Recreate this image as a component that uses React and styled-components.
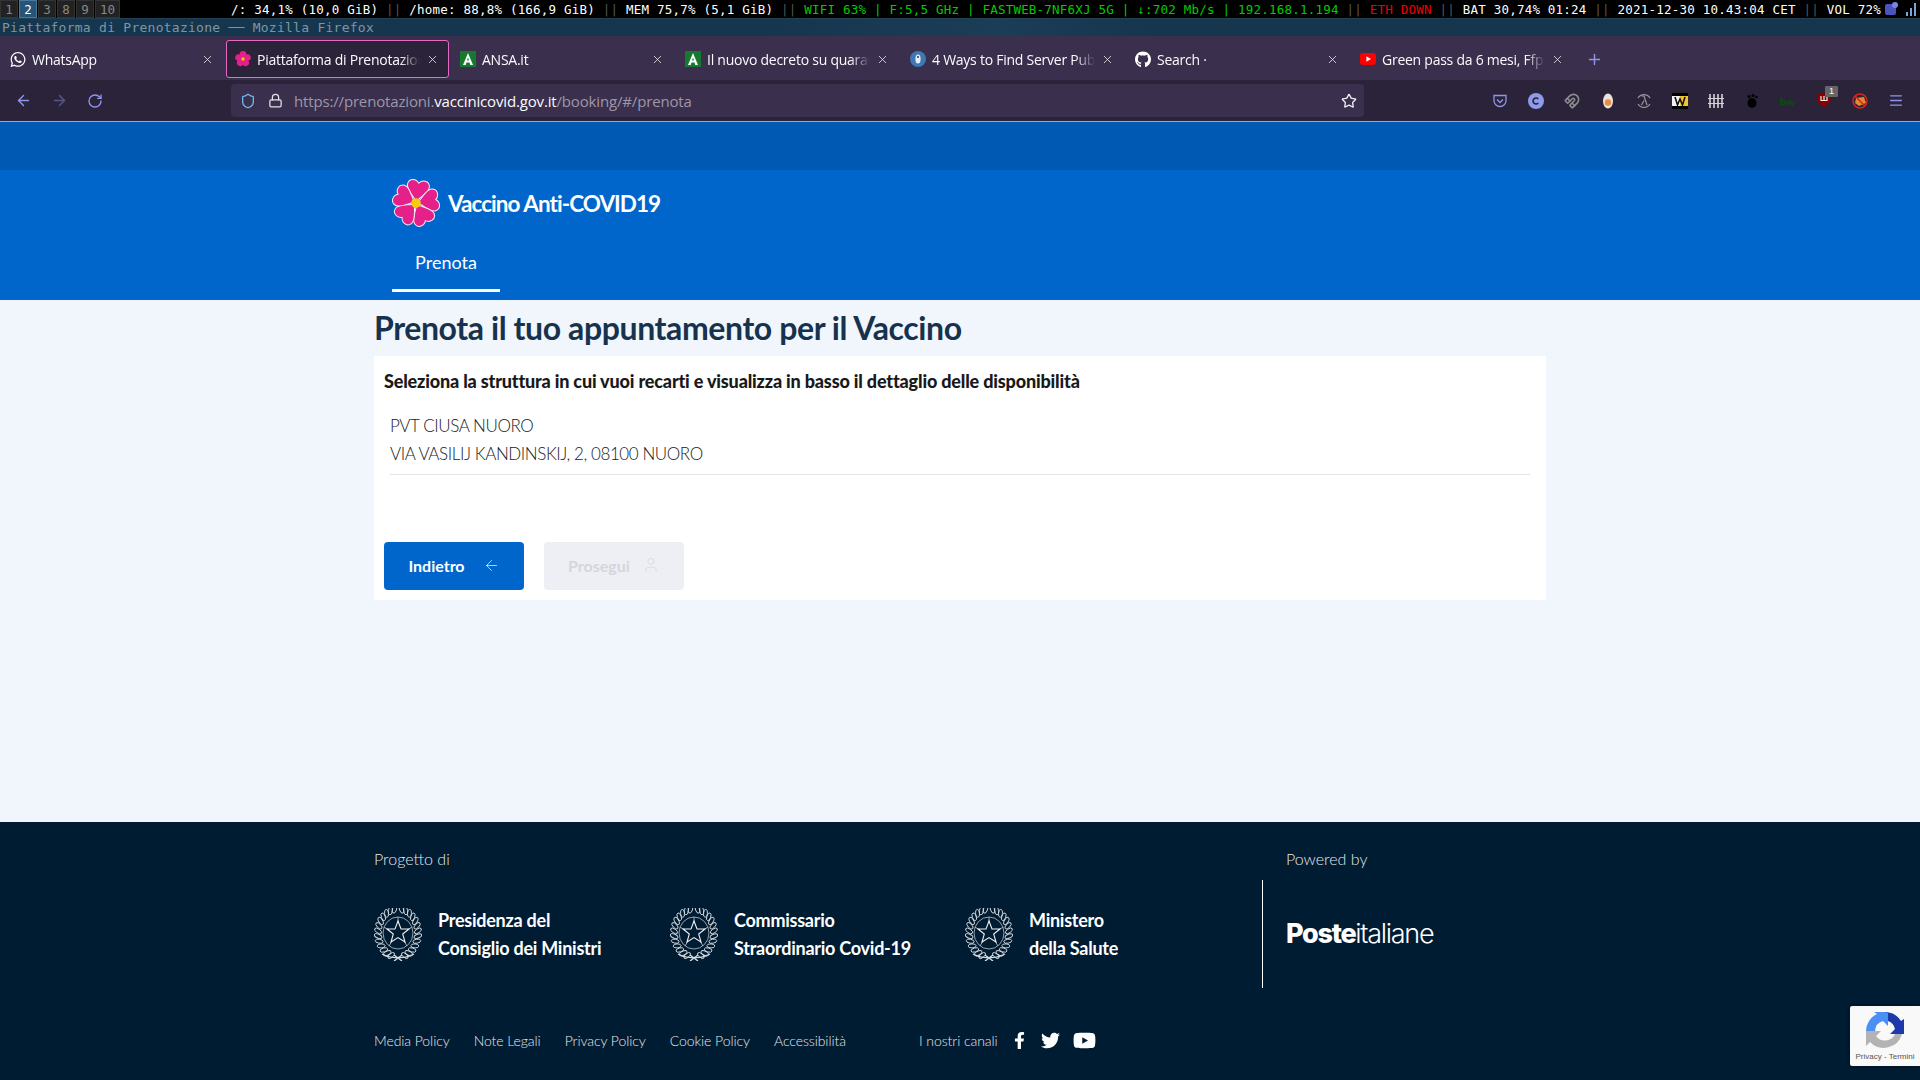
import React from 'react';
import styled, { createGlobalStyle } from 'styled-components';
import { FaWhatsapp, FaGithub, FaYoutube, FaFacebookF, FaTwitter } from 'react-icons/fa';
import { ArrowLeft, ArrowRight, RotateCw, Plus, X, Star, Lock, Shield, Menu, Magnet, User } from 'lucide-react';

const GlobalStyle = createGlobalStyle`
  html, body { margin: 0; padding: 0; height: 100%; overflow: hidden; }
  body { font-family: 'Lato', 'Open Sans', sans-serif; background: #f0f6fc; }
`;

const Screen = styled.div`
  height: 1080px;
  display: flex;
  flex-direction: column;
  position: relative;
  overflow: hidden;
`;

/* window manager bars */
const StatusBar = styled.div`
  height: 18px;
  background: #000;
  display: flex;
  align-items: center;
  justify-content: space-between;
  font-family: 'DejaVu Sans Mono', monospace;
  font-size: 12.5px;
  white-space: pre;
`;

const Workspaces = styled.div`
  display: flex;
  gap: 1px;
`;

const Workspace = styled.span`
  height: 18px;
  min-width: 18px;
  padding: 0 4px;
  box-sizing: border-box;
  display: flex;
  align-items: center;
  justify-content: center;
  border: 1px solid ${p => (p.$active ? '#4c7899' : '#333')};
  background: ${p => (p.$active ? '#285577' : '#222')};
  color: ${p => (p.$active ? '#fff' : '#888')};
`;

const Status = styled.div`
  display: flex;
  align-items: center;
  letter-spacing: 0.22px;
`;

const Chunk = styled.span`
  color: ${p => p.$color || '#fff'};
`;

const Tray = styled.svg`
  margin-left: 3px;
  flex: none;
`;

const TitleBar = styled.div`
  height: 18px;
  box-sizing: border-box;
  background: linear-gradient(90deg, #16364e 0%, #16364e 40%, #1b3d55 52%, #16364e 60%);
  border-top: 1px solid #1f4258;
  color: #7d96a6;
  font-family: 'DejaVu Sans Mono', monospace;
  font-size: 13px;
  letter-spacing: 0.26px;
  line-height: 17px;
  padding-left: 2px;
  white-space: pre;
`;

/* firefox */
const TabStrip = styled.div`
  height: 44px;
  background: #3a2f4c;
  display: flex;
  align-items: flex-start;
  padding: 4px 0 0 1px;
  box-sizing: border-box;
  gap: 2px;
`;

const Tab = styled.div`
  width: 223px;
  height: 38px;
  box-sizing: border-box;
  flex: none;
  display: flex;
  align-items: center;
  padding: 0 9px 0 8px;
  gap: 6px;
  border-radius: 3px;
  border: 1px solid ${p => (p.$active ? '#e56ac6' : 'transparent')};
  background: ${p => (p.$active ? '#2b2339' : 'transparent')};
  color: #fbfbfe;
  font-family: 'Open Sans', sans-serif;
  font-size: 14px;
  letter-spacing: -0.25px;
`;

const TabIcon = styled.span`
  width: 16px;
  height: 16px;
  flex: none;
  display: flex;
  align-items: center;
  justify-content: center;
`;

const TabLabel = styled.span`
  flex: 1;
  overflow: hidden;
  white-space: nowrap;
  mask-image: linear-gradient(90deg, #000 88%, transparent 100%);
`;

const NewTab = styled.div`
  margin-left: 10px;
  height: 38px;
  display: flex;
  align-items: center;
  color: #8f95ea;
`;

const NavBar = styled.div`
  height: 42px;
  box-sizing: border-box;
  background: #2b2339;
  border-bottom: 1px solid #d58bd6;
  display: flex;
  align-items: center;
  color: #8f95ea;
`;

const NavButtons = styled.div`
  width: 231px;
  flex: none;
  display: flex;
  align-items: center;
  gap: 19px;
  padding-left: 15px;
  box-sizing: border-box;
`;

const NavIcon = styled.span`
  display: flex;
  opacity: ${p => (p.$dim ? 0.45 : 1)};
`;

const UrlBar = styled.div`
  width: 1133px;
  height: 33px;
  box-sizing: border-box;
  flex: none;
  border-radius: 4px;
  background: #3a2f4c;
  display: flex;
  align-items: center;
  padding: 0 7px 0 9px;
  font-family: 'Open Sans', sans-serif;
  font-size: 15px;
  letter-spacing: -0.16px;
  color: #9d97aa;
`;

const UrlIcons = styled.div`
  display: flex;
  align-items: center;
  gap: 12px;
  margin-right: 11px;
`;

const UrlText = styled.div`
  flex: 1;
  b {
    font-weight: 400;
    color: #fbfbfe;
  }
`;

const Extensions = styled.div`
  flex: 1;
  display: flex;
  justify-content: flex-end;
  gap: 20px;
  padding-right: 16px;
`;

const Extension = styled.span`
  width: 16px;
  height: 16px;
  display: flex;
  align-items: center;
  justify-content: center;
  position: relative;
`;

const Badge = styled.span`
  position: absolute;
  top: -7px;
  right: -6px;
  width: 13px;
  height: 11px;
  background: #666;
  color: #fff;
  font-family: 'Liberation Sans', sans-serif;
  font-size: 9px;
  line-height: 11px;
  text-align: center;
  border-radius: 1px;
`;

/* page */
const TopBand = styled.div`
  height: 48px;
  background: #0059b3;
  flex: none;
`;

const Header = styled.header`
  height: 130px;
  flex: none;
  background: #0066cc;
  box-sizing: border-box;
  padding: 9px 0 0 392px;
  display: flex;
  flex-direction: column;
`;

const Brand = styled.div`
  display: flex;
  align-items: center;
  gap: 8px;
  color: #fff;
  font-size: 22.5px;
  font-weight: 700;
  letter-spacing: -0.95px;
  height: 48px;
`;

const HeaderTab = styled.div`
  margin-top: 17px;
  width: 108px;
  height: 48px;
  box-sizing: border-box;
  border-bottom: 3px solid #fff;
  color: #fff;
  font-size: 18px;
  text-align: center;
  line-height: 36px;
`;

const Main = styled.main`
  flex: 1;
  width: 1172px;
  margin: 0 auto;
  padding-top: 7px;
`;

const Title = styled.h1`
  margin: 0 0 8px;
  font-size: 32px;
  line-height: 41px;
  font-weight: 700;
  letter-spacing: -0.4px;
  color: #17324d;
`;

const Card = styled.section`
  background: #fff;
  height: 244px;
  box-sizing: border-box;
  padding: 12px 16px 10px 10px;
  display: flex;
  flex-direction: column;
`;

const CardTitle = styled.div`
  font-size: 18px;
  line-height: 26px;
  font-weight: 900;
  letter-spacing: -0.17px;
  color: #19191a;
`;

const Facility = styled.div`
  margin: 18px 0 0 6px;
  padding-bottom: 6px;
  border-bottom: 1px solid #e3e4e6;
  font-size: 17px;
  font-weight: 300;
  letter-spacing: -0.42px;
  line-height: 28px;
  color: #19191a;
`;

const Buttons = styled.div`
  margin-top: auto;
  display: flex;
  gap: 20px;
`;

const Button = styled.button`
  width: 140px;
  height: 48px;
  border: 0;
  border-radius: 4px;
  padding: 0 0 2px;
  display: flex;
  align-items: center;
  justify-content: center;
  gap: ${p => p.$gap || 18}px;
  font-family: inherit;
  font-size: 16px;
  font-weight: 700;
  background: ${p => (p.disabled ? '#eeeff4' : '#0066cc')};
  color: ${p => (p.disabled ? '#d4d6de' : '#fff')};
`;

const Footer = styled.footer`
  height: 258px;
  flex: none;
  background: #001c33;
  color: #fff;
`;

const FooterInner = styled.div`
  width: 1172px;
  margin: 0 auto;
  padding-top: 25px;
  display: flex;
  flex-direction: column;
`;

const FooterTop = styled.div`
  display: grid;
  grid-template-columns: 888px 1fr;
  height: 140px;
`;

const Caption = styled.div`
  font-size: 16px;
  font-weight: 300;
  line-height: 24px;
  color: #e6e9ec;
`;

const Partners = styled.div`
  display: grid;
  grid-template-columns: 296px 295px 1fr;
  margin-top: 20px;
  height: 86px;
  align-items: center;
`;

const Partner = styled.div`
  display: flex;
  align-items: center;
  gap: 16px;
  font-size: 18px;
  font-weight: 700;
  letter-spacing: -0.25px;
  line-height: 28px;
`;

const PoweredBy = styled.div`
  display: flex;
  flex-direction: column;
  padding-left: 24px;
  position: relative;
`;

const Rule = styled.div`
  position: absolute;
  left: 0;
  top: 33px;
  width: 1px;
  height: 108px;
  background: #fff;
`;

const Poste = styled.div`
  margin-top: 46px;
  font-family: 'Inter', sans-serif;
  font-size: 27px;
  line-height: 34px;
  letter-spacing: -1.3px;
  font-weight: 300;
  b {
    font-weight: 800;
  }
`;

const FooterLinks = styled.div`
  display: flex;
  align-items: center;
  margin-top: 42px;
  font-size: 14px;
  font-weight: 300;
  letter-spacing: -0.07px;
  color: #e6e9ec;
`;

const LinkList = styled.div`
  display: flex;
  gap: 24px;
  width: 545px;
`;

const Channels = styled.div`
  display: flex;
  align-items: center;
  gap: 13px;
`;

const Social = styled.div`
  display: flex;
  align-items: center;
  gap: 13px;
  color: #fff;
`;

const Recaptcha = styled.div`
  position: absolute;
  right: 0;
  top: 1006px;
  width: 70px;
  height: 60px;
  background: #f9f9f9;
  border-radius: 2px 0 0 2px;
  box-shadow: 0 0 5px rgba(0, 0, 0, 0.5);
  display: flex;
  flex-direction: column;
  align-items: center;
  padding-top: 6px;
  box-sizing: border-box;
`;

const RecaptchaText = styled.div`
  font-family: 'Liberation Sans', sans-serif;
  font-size: 8px;
  color: #555;
  white-space: nowrap;
  margin-top: 2px;
`;

const Flower = () => {
  const petals = [0, 72, 144, 216, 288];
  return (
    <svg width="48" height="48" viewBox="-24 -24 48 48">
      {petals.map(a => (
        <path
          key={a}
          transform={`rotate(${a + 8})`}
          d="M0 -1 C-3 -7 -12 -12 -11 -18 C-10 -24 -3 -24 0 -20 C3 -24 10 -24 11 -18 C12 -12 3 -7 0 -1Z"
          fill="#e6208a"
          stroke="#f4f0f4"
          strokeWidth="1"
        />
      ))}
      <circle r="4.8" fill="#fdc80e" />
    </svg>
  );
};

// leaves along both sides of the wreath
const wreathLeaves = Array.from({ length: 13 }, (_, i) => {
  const t = ((20 + i * 12.5) * Math.PI) / 180;
  return { x: 20 * Math.sin(t), y: 24 * Math.cos(t), r: (20 + i * 12.5) };
});

const Emblem = () => (
  <svg width="48" height="53" viewBox="-24 -27 48 53" fill="none" stroke="#d5dade">
    {wreathLeaves.map(l => (
      <g key={l.r} strokeWidth="0.9">
        <ellipse cx={l.x} cy={l.y - 2} rx="2" ry="4" transform={`rotate(${-l.r + 150} ${l.x} ${l.y - 2})`} />
        <ellipse cx={-l.x} cy={l.y - 2} rx="2" ry="4" transform={`rotate(${l.r - 150} ${-l.x} ${l.y - 2})`} />
      </g>
    ))}
    <ellipse cx="0" cy="-2" rx="15" ry="16" strokeWidth="0.7" />
    <path d="M0 -18 V-12 M-14 -8 L-9 -5 M14 -8 L9 -5 M-9 11 L-6 6 M9 11 L6 6" strokeWidth="0.7" />
    <path
      d="M0 -14 L3 -6 L11 -6 L4.7 -1 L7 7 L0 2.6 L-7 7 L-4.7 -1 L-11 -6 L-3 -6Z"
      stroke="#eef0f2"
      strokeWidth="1.1"
    />
    <path d="M-16 19 C-7 24 7 24 16 19 M-4 20 L4 26 M4 20 L-4 26" strokeWidth="1.4" />
  </svg>
);

const AnsaIcon = () => (
  <svg width="16" height="16" viewBox="0 0 16 16">
    <rect width="16" height="16" fill="#16792f" />
    <path d="M8 2 L13 14 H10.3 L9.5 11.6 H6.5 L5.7 14 H3 Z M8 6.5 L7 9.6 H9 Z" fill="#fff" fillRule="evenodd" />
  </svg>
);

const FlowerFavicon = () => (
  <svg width="16" height="16" viewBox="-12 -12 24 24">
    {[0, 72, 144, 216, 288].map(a => (
      <circle key={a} cx="0" cy="-7" r="5" fill="#e6208a" transform={`rotate(${a})`} />
    ))}
    <circle r="2.6" fill="#fdc80e" />
  </svg>
);

const BitwardenIcon = () => (
  <svg width="16" height="16" viewBox="0 0 16 16">
    <circle cx="8" cy="8" r="8" fill="#3f78b5" />
    <ellipse cx="8" cy="8" rx="2.6" ry="4.6" fill="#e8eef5" />
    <circle cx="8" cy="6" r="1" fill="#25374d" />
  </svg>
);

const YoutubeFavicon = () => (
  <svg width="16" height="16" viewBox="0 0 16 16">
    <rect y="2" width="16" height="12" rx="3" fill="#f00" />
    <path d="M6.4 5.2 L11 8 L6.4 10.8Z" fill="#fff" />
  </svg>
);

const tabs = [
  { label: 'WhatsApp', icon: <FaWhatsapp size={17} color="#fff" /> },
  { label: 'Piattaforma di Prenotazione', icon: <FlowerFavicon />, active: true },
  { label: 'ANSA.it', icon: <AnsaIcon /> },
  { label: 'Il nuovo decreto su quarantena', icon: <AnsaIcon /> },
  { label: '4 Ways to Find Server Public IP', icon: <BitwardenIcon /> },
  { label: 'Search ·', icon: <FaGithub size={17} color="#fff" /> },
  { label: 'Green pass da 6 mesi, Ffp2 obbligatoria', icon: <YoutubeFavicon /> },
];

const extensions = [
  <svg key="pocket" width="16" height="16" viewBox="0 0 16 16" fill="none" stroke="#8f95ea" strokeWidth="1.3">
    <path d="M2 2.5 H14 V7.5 A6 6 0 0 1 2 7.5Z" />
    <path d="M5 6.5 L8 9.5 L11 6.5" />
  </svg>,
  <svg key="c" width="16" height="16" viewBox="0 0 16 16">
    <circle cx="8" cy="8" r="8" fill="#8f9bea" />
    <path d="M10.3 6 A3 3 0 1 0 10.3 10" fill="none" stroke="#2b2339" strokeWidth="1.6" />
  </svg>,
  <Magnet key="magnet" size={16} color="#8d8d90" strokeWidth={2.4} />,
  <svg key="egg" width="16" height="16" viewBox="0 0 16 16">
    <ellipse cx="8" cy="8" rx="5" ry="7.5" fill="#e8e3dc" />
    <circle cx="8" cy="9.5" r="3.2" fill="#f08a3c" />
  </svg>,
  <svg key="lambda" width="16" height="16" viewBox="0 0 16 16" fill="none" stroke="#9a97a3" strokeWidth="1.2">
    <path d="M2 5 A7 7 0 0 1 14 5 M2 11 A7 7 0 0 0 14 11" />
    <path d="M5.5 3 H8 L11 12 M8 7.5 L5.5 12" />
  </svg>,
  <svg key="w" width="16" height="16" viewBox="0 0 16 16">
    <rect width="16" height="16" fill="#000" />
    <rect y="3" width="8" height="10" fill="#f2f2f2" />
    <rect x="8" y="3" width="8" height="10" fill="#f4c430" />
    <path d="M3 4 L5.5 12 L8 6 L10.5 12 L13 4" fill="none" stroke="#111" strokeWidth="1.6" />
  </svg>,
  <svg key="fence" width="16" height="16" viewBox="0 0 16 16" stroke="#d5d2da" strokeWidth="1.6">
    <path d="M2 1 V15 M6 1 V15 M10 1 V15 M14 1 V15" />
    <path d="M0 5.5 H16 M0 10.5 H16" strokeWidth="1.2" />
  </svg>,
  <svg key="foot" width="16" height="16" viewBox="0 0 16 16" fill="#000">
    <ellipse cx="8" cy="10" rx="4.5" ry="5" />
    <circle cx="5" cy="3.5" r="1.6" />
    <circle cx="9" cy="2.5" r="1.6" />
    <circle cx="12.5" cy="4" r="1.3" />
  </svg>,
  <svg key="bw" width="16" height="16" viewBox="0 0 16 16" fill="none" stroke="#0d4a12" strokeWidth="1.8">
    <path d="M1 4 V11.5 H5 V8 H1" />
    <path d="M7 8 L8.5 11.5 L10.5 8 L12.5 11.5 L15 8" />
  </svg>,
  <span key="ublock">
    <svg width="16" height="16" viewBox="0 0 16 16">
      <path d="M1.5 2 H14.5 V9 C14.5 12 11 14.5 8 16 C5 14.5 1.5 12 1.5 9Z" fill="#800" />
      <path d="M5 5 V9.5 H8 M8 5 V9.5 H11 V5" fill="none" stroke="#eee" strokeWidth="1.2" />
    </svg>
    <Badge>1</Badge>
  </span>,
  <svg key="nofox" width="16" height="16" viewBox="0 0 16 16">
    <path d="M4 5 L12 4 L14 10 L7 13 L3 10Z" fill="#e08a32" />
    <circle cx="8" cy="8" r="7" fill="none" stroke="#d8241f" strokeWidth="1.5" />
    <path d="M3 3 L13 13" stroke="#d8241f" strokeWidth="1.5" />
  </svg>,
  <Menu key="menu" size={17} color="#8f95ea" />,
];

const App = () => (
  <Screen>
    <GlobalStyle />
    <StatusBar>
      <Workspaces>
        {['1', '2', '3', '8', '9', '10'].map(n => (
          <Workspace key={n} $active={n === '2'}>{n}</Workspace>
        ))}
      </Workspaces>
      <Status>
        <Chunk>/: 34,1% (10,0 GiB) </Chunk>
        <Chunk $color="#555">|| </Chunk>
        <Chunk>/home: 88,8% (166,9 GiB) </Chunk>
        <Chunk $color="#555">|| </Chunk>
        <Chunk>MEM 75,7% (5,1 GiB) </Chunk>
        <Chunk $color="#555">|| </Chunk>
        <Chunk $color="#0c0">WIFI 63% | F:5,5 GHz | FASTWEB-7NF6XJ 5G | ↓:702 Mb/s | 192.168.1.194 </Chunk>
        <Chunk $color="#555">|| </Chunk>
        <Chunk $color="#e00">ETH DOWN </Chunk>
        <Chunk $color="#555">|| </Chunk>
        <Chunk>BAT 30,74% 01:24 </Chunk>
        <Chunk $color="#555">|| </Chunk>
        <Chunk>2021-12-30 10.43:04 CET </Chunk>
        <Chunk $color="#555">|| </Chunk>
        <Chunk>VOL 72%</Chunk>
        <Tray width="36" height="16" viewBox="0 0 36 16">
          <rect x="1" y="3" width="11" height="11" rx="2" fill="#4b53bc" />
          <circle cx="11" cy="4" r="3" fill="#7b83eb" />
          <path d="M22 15 H24 V11 H22Z M26 15 H28 V7 H26Z M30 15 H32 V2 H30Z" fill="#7fa0d8" />
        </Tray>
      </Status>
    </StatusBar>
    <TitleBar>Piattaforma di Prenotazione ── Mozilla Firefox</TitleBar>
    <TabStrip>
      {tabs.map(t => (
        <Tab key={t.label} $active={t.active}>
          <TabIcon>{t.icon}</TabIcon>
          <TabLabel>{t.label}</TabLabel>
          <X size={13} color="#e8e6ee" strokeWidth={1.5} />
        </Tab>
      ))}
      <NewTab><Plus size={17} /></NewTab>
    </TabStrip>
    <NavBar>
      <NavButtons>
        <NavIcon><ArrowLeft size={17} /></NavIcon>
        <NavIcon $dim><ArrowRight size={17} /></NavIcon>
        <NavIcon><RotateCw size={16} /></NavIcon>
      </NavButtons>
      <UrlBar>
        <UrlIcons>
          <Shield size={16} color="#6fb7ea" />
          <Lock size={15} color="#e4e2ea" />
        </UrlIcons>
        <UrlText>https://prenotazioni.<b>vaccinicovid.gov.it</b>/booking/#/prenota</UrlText>
        <Star size={16} color="#f0eef4" />
      </UrlBar>
      <Extensions>
        {extensions.map(e => (
          <Extension key={e.key}>{e}</Extension>
        ))}
      </Extensions>
    </NavBar>

    <TopBand />
    <Header>
      <Brand>
        <Flower />
        Vaccino Anti-COVID19
      </Brand>
      <HeaderTab>Prenota</HeaderTab>
    </Header>
    <Main>
      <Title>Prenota il tuo appuntamento per il Vaccino</Title>
      <Card>
        <CardTitle>Seleziona la struttura in cui vuoi recarti e visualizza in basso il dettaglio delle disponibilità</CardTitle>
        <Facility>
          PVT CIUSA NUORO
          <br />
          VIA VASILIJ KANDINSKIJ, 2, 08100 NUORO
        </Facility>
        <Buttons>
          <Button>
            Indietro
            <ArrowLeft size={17} strokeWidth={1} />
          </Button>
          <Button disabled $gap={12}>
            Prosegui
            <User size={18} strokeWidth={1} />
          </Button>
        </Buttons>
      </Card>
    </Main>
    <Footer>
      <FooterInner>
        <FooterTop>
          <div>
            <Caption>Progetto di</Caption>
            <Partners>
              <Partner>
                <Emblem />
                <div>Presidenza del<br />Consiglio dei Ministri</div>
              </Partner>
              <Partner>
                <Emblem />
                <div>Commissario<br />Straordinario Covid-19</div>
              </Partner>
              <Partner>
                <Emblem />
                <div>Ministero<br />della Salute</div>
              </Partner>
            </Partners>
          </div>
          <PoweredBy>
            <Rule />
            <Caption>Powered by</Caption>
            <Poste><b>Poste</b>italiane</Poste>
          </PoweredBy>
        </FooterTop>
        <FooterLinks>
          <LinkList>
            <span>Media Policy</span>
            <span>Note Legali</span>
            <span>Privacy Policy</span>
            <span>Cookie Policy</span>
            <span>Accessibilità</span>
          </LinkList>
          <Channels>
            <span>I nostri canali</span>
            <Social>
              <FaFacebookF size={17} />
              <FaTwitter size={19} />
              <FaYoutube size={23} />
            </Social>
          </Channels>
        </FooterLinks>
      </FooterInner>
    </Footer>
    <Recaptcha>
      <svg width="38" height="38" viewBox="0 0 38 38">
        <path d="M0 19 A19 19 0 0 1 11 2 L8 0 H22 V14 L17 9 A11 11 0 0 0 9 19 H0 Z" fill="#4a90f5" />
        <path d="M19 0 A19 19 0 0 1 35 9 L38 7 V22 H24 L29 17 A11 11 0 0 0 22 9 V0 Z" fill="#1c3aa9" />
        <path d="M29 22 A11 11 0 0 1 10 24 L15 19 H0 V34 L4 30 A19 19 0 0 0 36 22 Z" fill="#b3b3b3" />
      </svg>
      <RecaptchaText>Privacy - Termini</RecaptchaText>
    </Recaptcha>
  </Screen>
);

export default App;
